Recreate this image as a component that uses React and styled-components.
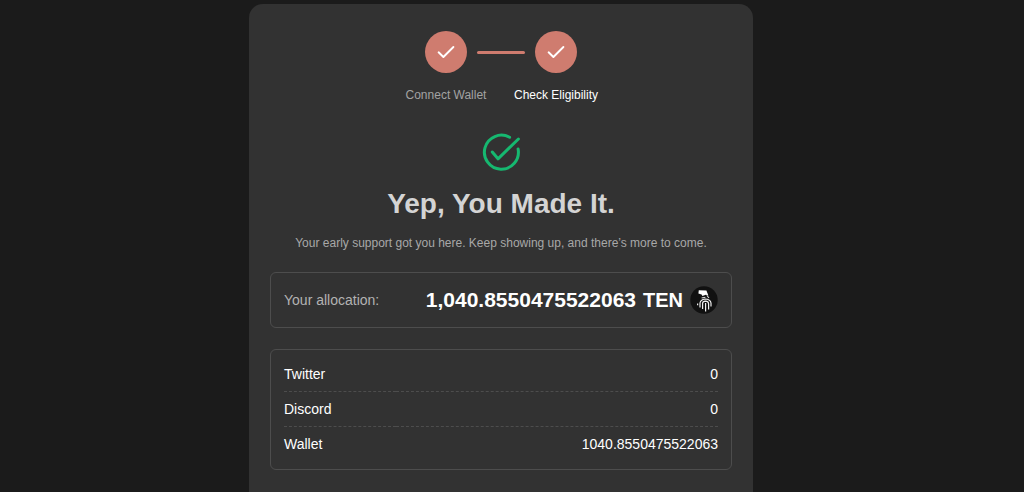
import React from 'react'
import styled, { createGlobalStyle } from 'styled-components'

const GlobalStyle = createGlobalStyle`
* {
    box-sizing: border-box;
}
body {
    margin: 0;
    background-color: #1b1b1b;
    color: #fff;
    font-family: "Liberation Sans", Arial, sans-serif;
}
`

const Page = styled.main`
display: flex;
justify-content: center;
min-height: 100vh;
padding: 4px 22px 0 0;
`

const Card = styled.section`
display: flex;
flex-direction: column;
align-items: center;
width: 100%;
max-width: 504px;
padding: 27px 21px 22px;
border-radius: 14px 14px 0 0;
background-color: #323232;
`

const Steps = styled.div`
display: flex;
align-items: center;
gap: 10px;
`

const StepCircle = styled.span`
display: flex;
align-items: center;
justify-content: center;
width: 42px;
height: 42px;
border-radius: 50%;
background-color: #cf7c6f;
`

const Connector = styled.span`
width: 48px;
height: 3px;
border-radius: 2px;
background-color: #cf7c6f;
`

const StepLabels = styled.div`
display: grid;
grid-template-columns: 110px 110px;
margin-top: 14px;
text-align: center;
`

const StepLabel = styled.span`
font-size: 12px;
line-height: 16px;
color: ${props => props.$active ? '#fff' : '#a3a3a3'};
`

const SuccessIcon = styled.svg`
width: 40px;
height: 40px;
margin-top: 29px;
`

const Title = styled.h1`
margin: 14px 0 0;
font-size: 28px;
line-height: 36px;
color: #d4d4d4;
`

const Message = styled.p`
margin: 13px 0 0;
font-size: 12px;
line-height: 16px;
color: #a8a8a8;
`

const Box = styled.div`
width: 100%;
margin-top: 21px;
padding: ${props => props.$pad};
border: 1px solid #4d4d4d;
border-radius: 6px;
`

const Allocation = styled.div`
display: flex;
align-items: center;
justify-content: space-between;
`

const AllocationLabel = styled.span`
font-size: 14px;
color: #b3b3b3;
`

const Amount = styled.strong`
display: flex;
align-items: center;
gap: 7px;
font-size: 21px;
line-height: 28px;
`

const TokenName = styled.span`
font-size: 20px;
`

const TokenLogo = styled.svg`
width: 28px;
height: 28px;
`

const Sources = styled.table`
width: 100%;
border-collapse: collapse;
font-size: 14px;
line-height: 20px;
`

const SourceRow = styled.tr`
& + & {
    border-top: 1px dashed #4d4d4d;
}
`

const SourceName = styled.th`
padding: 7px 0;
font-weight: normal;
text-align: left;
`

const SourceValue = styled.td`
padding: 7px 0;
text-align: right;
`

const steps = ['Connect Wallet', 'Check Eligibility']

const sources = [
    { name: 'Twitter', value: '0' },
    { name: 'Discord', value: '0' },
    { name: 'Wallet', value: '1040.8550475522063' },
]

const Check = () => (
    <svg width="18" height="14" viewBox="0 0 18 14" fill="none" stroke="#fff" strokeWidth="1.9" strokeLinecap="round" strokeLinejoin="round" aria-hidden="true">
        <path d="M1.6 7.3 6.4 12 16.4 2" />
    </svg>
)

const App = () => {
    return (
        <Page>
            <GlobalStyle />
            <Card>
                <Steps>
                    <StepCircle><Check /></StepCircle>
                    <Connector />
                    <StepCircle><Check /></StepCircle>
                </Steps>
                <StepLabels>
                    {steps.map((label, i) =>
                        <StepLabel key={label} $active={i === steps.length - 1}>{label}</StepLabel>
                    )}
                </StepLabels>
                <SuccessIcon viewBox="0 0 40 40" fill="none" stroke="#16b870" strokeWidth="3" strokeLinecap="round" strokeLinejoin="round" aria-hidden="true">
                    <path d="M28.6 5.3A17 17 0 1 0 37.1 17" />
                    <path d="M11.3 20 17 26.8 37.4 7" />
                </SuccessIcon>
                <Title>Yep, You Made It.</Title>
                <Message>Your early support got you here. Keep showing up, and there’s more to come.</Message>
                <Box $pad="13px">
                    <Allocation>
                        <AllocationLabel>Your allocation:</AllocationLabel>
                        <Amount>
                            <span>1,040.8550475522063</span>
                            <TokenName>TEN</TokenName>
                            <TokenLogo viewBox="0 0 28 28" aria-hidden="true">
                                <circle cx="14" cy="14" r="13.7" fill="#111" />
                                <path d="M8.8 4.2 16.4 4.4 18.4 9.6 15.8 8.8 12.4 10 11.6 8.4 8.4 7.4Z" fill="#fff" />
                                <path d="M16.8 9.4 19 12M11.6 12 15.4 11.2" stroke="#ddd" strokeWidth="1.1" />
                                <path d="M10 21.5V17Q10.6 13.6 15 13Q20.4 13.2 21 17V20.5M12.6 23V17.2Q12.8 15.2 15.3 15.1Q18.4 15.2 18.6 17.8V23.5M15.6 17V25.4M7.6 17.5V19.2" fill="none" stroke="#eee" strokeWidth="1.2" />
                            </TokenLogo>
                        </Amount>
                    </Allocation>
                </Box>
                <Box $pad="7px 13px 8px">
                    <Sources>
                        <tbody>
                            {sources.map(e =>
                                <SourceRow key={e.name}>
                                    <SourceName scope="row">{e.name}</SourceName>
                                    <SourceValue>{e.value}</SourceValue>
                                </SourceRow>
                            )}
                        </tbody>
                    </Sources>
                </Box>
            </Card>
        </Page>
    )
}

export default App
